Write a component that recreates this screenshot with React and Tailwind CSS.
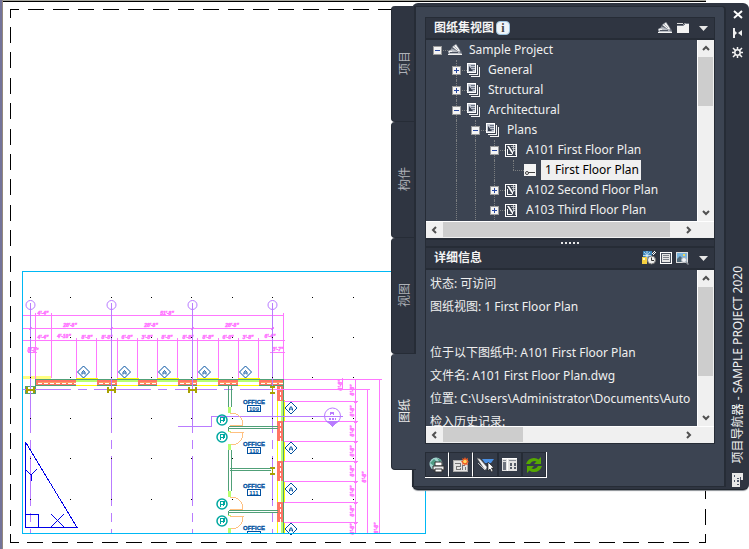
import React, { useState } from "react";

const tabs = [
  { id: "project", label: "项目" },
  { id: "constructs", label: "构件" },
  { id: "views", label: "视图" },
  { id: "sheets", label: "图纸" },
];

const treeRows = [
  { label: "Sample Project", level: 0, icon: "project", open: true },
  { label: "General", level: 1, icon: "subset", open: false },
  { label: "Structural", level: 1, icon: "subset", open: false },
  { label: "Architectural", level: 1, icon: "subset", open: true },
  { label: "Plans", level: 2, icon: "subset", open: true },
  { label: "A101 First Floor Plan", level: 3, icon: "sheet", open: true },
  { label: "1 First Floor Plan", level: 4, icon: "view", leaf: true },
  { label: "A102 Second Floor Plan", level: 3, icon: "sheet", open: false },
  { label: "A103 Third Floor Plan", level: 3, icon: "sheet", open: false },
];

const details = [
  "状态: 可访问",
  "图纸视图: 1 First Floor Plan",
  "",
  "位于以下图纸中: A101 First Floor Plan",
  "文件名: A101 First Floor Plan.dwg",
  "位置: C:\\Users\\Administrator\\Documents\\Auto",
  "检入历史记录:",
];

/* ---------- drawing ---------- */

const PINK = "#ff78ff";
const PURPLE = "#b97cff";
const NAVY = "#0050a0";
const GREEN = "#50a078";
const LIME = "#b8ff70";
const RED = "#ff7464";

const gridX = [30, 111, 192, 272];
const windowX = [76, 117, 157, 197, 238];
const wallX = [
  [36, 76],
  [97, 117],
  [138, 157],
  [178, 197],
  [218, 238],
  [259, 283],
];
const wallY = [
  [385, 401],
  [421, 441],
  [461, 481],
  [502, 522],
];
const windowY = [
  [400, 421],
  [441, 461],
  [481, 502],
  [522, 533],
];
const dimX = [51, 76, 96, 117, 137, 157, 177, 197, 218, 238, 258, 272, 283];
const dimY = [401, 421, 441, 461, 481, 502, 522];
const dimLabels = [
  [43, 315, "4'-4\""],
  [167, 315, "51'-8\""],
  [70, 327, "28'-8\""],
  [151, 327, "28'-8\""],
  [232, 327, "28'-8\""],
  [43, 339, "4'-4\""],
  [64, 338, "4'-10\""],
  [87, 339, "8'-8\""],
  [107, 339, "8'-8\""],
  [127, 339, "6'-0\""],
  [147, 339, "3'-8\""],
  [167, 339, "8'-8\""],
  [188, 339, "8'-8\""],
  [208, 339, "8'-8\""],
  [228, 339, "6'-0\""],
  [248, 339, "3'-8\""],
  [270, 338, "6'-4\""],
  [278, 351, "3'-7\""],
  [33, 352, "8'-8\""],
];
const sideLabels = [
  [342, 385],
  [354, 390],
  [354, 411],
  [354, 431],
  [354, 451],
  [354, 471],
  [354, 491],
  [354, 511],
  [354, 529],
  [366, 477],
  [378, 528],
];

const Diamond = ({ x, y }) => (
  <g stroke={NAVY} fill="none" shapeRendering="auto">
    <path d={`M${x - 6} ${y}L${x} ${y - 6}L${x + 6} ${y}L${x} ${y + 6}Z`} />
    <path d={`M${x - 1.5} ${y + 2.5}v-2l1.500 -2l1.500 2v2M${x - 1} ${y + 1}h2`} />
  </g>
);

const Drawing = () => (
  <svg
    className="absolute inset-0 h-full w-full"
    viewBox="0 0 749 549"
    preserveAspectRatio="xMinYMin meet"
    shapeRendering="crispEdges"
    fill="none"
    role="img"
    aria-label="First Floor Plan"
  >
    {/* sheet edges */}
    <path d="M0 .5H706" stroke="#a8a8a0" />
    <path d="M2 1.5H706" stroke="#000" />
    <rect x="0" y="0" width="2" height="549" fill="#73739a" />
    <rect x="2" y="0" width="1" height="549" fill="#93887e" />
    <path d="M10 9.5h9M28 9.5H420" stroke="#000" strokeDasharray="16 9" />
    <path d="M10.5 9v9" stroke="#000" />
    <path d="M10.5 27V530" stroke="#000" strokeDasharray="16 9.4" />
    <path d="M10.5 534v8.500h8" stroke="#000" />
    <path d="M27 542.5H692" stroke="#000" strokeDasharray="16 8.85" />
    <path d="M705.5 490v9M705.5 509v16M705.5 534v8.500h-7" stroke="#000" />

    {/* right wall */}
    {windowY.map(([a, b]) => (
      <g key={a}>
        <rect x="281" y={a} width="3" height={b - a} fill={LIME} />
        <path d={`M277.500 ${a}V${b}M284.500 ${a}V${b}`} stroke="#ff0" />
        <path d={`M283.500 ${a}V${b}`} stroke={GREEN} />
      </g>
    ))}
    {wallY.map(([a, b]) => (
      <g key={a}>
        <rect x="277" y={a} width="6" height={b - a} fill={RED} />
        <path d={`M280.500 ${a + 2}V${b}`} stroke="#fff" strokeDasharray="3 2" />
        <path d={`M283.500 ${a}V${b}`} stroke={GREEN} />
      </g>
    ))}

    {/* top wall */}
    <rect x="23" y="376" width="28" height="3" fill="#ffff80" />
    {windowX.map((x) => (
      <g key={x}>
        <rect x={x} y="380" width="21" height="2" fill={LIME} />
        <path d={`M${x} 379.500h21`} stroke={GREEN} />
        <path d={`M${x} 378.500h22M${x} 385.500h21`} stroke="#ff0" />
      </g>
    ))}
    {wallX.map(([a, b]) => (
      <g key={a}>
        <rect x={a} y="380" width={b - a} height="5" fill={RED} />
        <path d={`M${a} 379.500H${b}M${a} 385.500H${b}`} stroke={GREEN} />
        <path d={`M${a + 2} 382.500H${b}`} stroke="#ffa060" />
        <path d={`M${a + 2} 383.500H${b}`} stroke="#fff" strokeDasharray="4 2" />
      </g>
    ))}
    <path d="M25.500 386.500h10v7h-10zM35.500 379v7M283.500 379v22" stroke={GREEN} />

    {/* dimensions */}
    <g stroke={PINK}>
      <path d="M23 315.500H284M23 328.500H273M23 340.500H284M28 347.500h9M28 352.500h9M270 352.500h15" />
      <path d="M30.500 326V390M35.500 313V379M272.500 340V378M283.500 313V379" />
      <path d="M51.500 313V340" />
      {dimX.map((x) => (
        <path key={x} d={`M${x}.500 338V378M${x - 1} 340.500h3M${x} 341.500h1`} />
      ))}
      {gridX.map((x) => (
        <path key={x} d={`M${x - 1} 328.500h3M${x} 327.500h2M${x - 1} 329.500h2`} />
      ))}
      <path d="M355.500 379V533M367.500 389V533M379.500 379V533M342.500 378V390" />
      <path d="M284 379.500H382M273 389.500H370" />
      {dimY.map((y) => (
        <path key={y} d={`M284 ${y}.500h74M354 ${y + 1}.500h3`} />
      ))}
    </g>
    <g
      fill={PINK}
      stroke={PINK}
      strokeWidth=".5"
      className="font-['Liberation_Sans',sans-serif] text-[5px] font-bold italic"
      textAnchor="middle"
    >
      {dimLabels.map(([x, y, t]) => (
        <text key={`${x}-${y}`} x={x} y={y}>
          {t}
        </text>
      ))}
      {sideLabels.map(([x, y]) => (
        <text key={`${x}-${y}`} transform={`translate(${x} ${y}) rotate(-90)`}>
          8'-8"
        </text>
      ))}
    </g>

    {/* column grid */}
    <g stroke={PURPLE}>
      {gridX.map((x) => (
        <g key={x}>
          <circle cx={x + 0.5} cy="305" r="4.500" shapeRendering="auto" />
          <path
            d={`M${x}.500 303V433M${x}.500 440v9M${x}.500 456v50M${x}.500 513v9M${x}.500 529v4`}
          />
        </g>
      ))}
      <path d="M23 389.500h48M78 389.500h9M94 389.500h57M158 389.500h9M175 389.500h42M224 389.500h9M240 389.500h33" />
      <path d="M178 426.500h33.500v-10H343" />
      <circle cx="332.500" cy="416" r="8" shapeRendering="auto" />
      <path d="M330.500 415v-3h3v3M331 413.500h3" />
      <path d="M329 418.500h7M329 419.500h7" strokeDasharray="2 1" />
      <path d="M326 421.500h13M328 422.500h9" />
    </g>
    <path d="M328 423h9l-4.500 4z" fill={PURPLE} />
    <g fill="#a8a000">
      {[30, 111, 192].map((x) => (
        <path key={x} d={`M${x - 4} 387h2v2h5v-2h2v6h-2v-2h-5v2h-2z`} />
      ))}
      <path d="M270 386h5v2h-2v4h2v2h-5v-2h2v-4h-2zM270 467h5v2h-2v4h2v2h-5v-2h2v-4h-2z" />
    </g>
    {windowX.map((x) => (
      <Diamond key={x} x={x + 7.5} y={372} />
    ))}
    {[408, 448, 489, 529].map((y) => (
      <Diamond key={y} x={291} y={y} />
    ))}

    {/* offices */}
    <g stroke={GREEN}>
      <path d="M228.500 386v21M231.500 386v21M228.500 427v5M228.500 450v41M231.500 450v41M228.500 511v4" />
      <path d="M229 426.500h49M229 428.500h49M230 468.500h41M230 470.500h41M229 510.500h49M229 512.500h49" />
    </g>
    <path
      d="M228 407h3v6h-3zM228 431h3v1h-3zM228 444h3v6h-3zM228 491h3v6h-3zM228 515h3v1h-3zM228 528h3v5h-3z"
      fill={LIME}
    />
    <path
      d="M230 413.500h5q8 3 8 12h-13M230 432.500h13q0 9 -8 12h-4M230 497.500h5q8 3 8 12h-13M230 516.500h13q0 9 -8 12h-4"
      stroke="#ffc080"
    />
    {[420, 437, 504, 521].map((y) => (
      <g key={y} stroke="#00a8a0">
        <circle cx="222" cy={y} r="5" strokeWidth="1.500" shapeRendering="auto" />
        <path d={`M220.500 ${y - 3}v6M220 ${y - 2.5}h4v3h-3M223.500 ${y - 2}v4`} />
      </g>
    ))}
    <g
      fill={NAVY}
      className="font-['Liberation_Sans',sans-serif] text-[6px] font-bold"
      textAnchor="middle"
    >
      {[109, 110, 111].map((n, i) => (
        <g key={n}>
          <text x="254" y={404 + i * 42} stroke={NAVY} strokeWidth=".3">
            OFFICE
          </text>
          <text x="254" y={411 + i * 42}>
            {n}
          </text>
          <rect
            x="247.500"
            y={405.5 + i * 42}
            width="13"
            height="6"
            stroke={NAVY}
            fill="none"
          />
        </g>
      ))}
      <text x="254" y="530" stroke={NAVY} strokeWidth=".3">
        OFFICE
      </text>
    </g>
    <path d="M247 531.500h14M247.500 531v2M260.500 531v2" stroke={NAVY} />

    {/* grid snaps */}
    {[297, 337, 377, 418, 458, 499].map((y) => (
      <path
        key={y}
        d={`M30 ${y}.500H354`}
        stroke="#000"
        strokeDasharray="1 39.350"
      />
    ))}

    {/* ucs icon */}
    <g stroke="#0000e8">
      <path d="M25.500 442V527.500H77L25.500 442" />
      <path d="M25 514.500h13v13M51 514l13 13M64 514l-13 13M25 469l6 6l6 -6M31.500 475v6" />
    </g>
    <rect x="22.500" y="271.500" width="403" height="262" stroke="#00b8f4" />
  </svg>
);

/* ---------- icons ---------- */

const ProjectIcon = () => (
  <svg width="15" height="12" viewBox="0 0 15 12" aria-hidden="true">
    <path d="M0 7L4 5L14 8V11H1Z" fill="#b9bdc4" />
    <path d="M0 10.500h14M1 7.500h3" stroke="#f4f4f4" />
    <path d="M2 8.500h8" stroke="#4b5260" />
    <path d="M4 3L8 0L12 6L13 9L9 7Z" fill="#f4f4f4" stroke="#5c6370" strokeWidth=".6" />
    <path d="M3 4l5 3M6 2l4 4" stroke="#9aa0aa" strokeWidth=".8" />
    <path d="M11 7l3 1v2z" fill="#5c6370" />
  </svg>
);

const SubsetIcon = () => (
  <svg width="14" height="14" viewBox="0 0 14 14" aria-hidden="true" fill="none">
    <g shapeRendering="crispEdges">
      <rect x=".5" y=".5" width="8" height="9" fill="#c3c8d2" stroke="#fff" />
      <path d="M4 2.500h4M4 4.500h4M5 6.500h3" stroke="#6b7486" />
      <path d="M2 11.500H10.500V2M4 13.500H12.500V4" stroke="#f4f4f4" />
    </g>
    <path d="M2 3v5h4z" fill="#384050" />
  </svg>
);

const SheetIcon = () => (
  <svg width="12" height="13" viewBox="0 0 12 13" aria-hidden="true" fill="none">
    <rect x=".5" y=".5" width="11" height="12" fill="#39414f" stroke="#fff" />
    <path d="M2 2l6 9V8L4 2z" fill="#fff" />
    <path d="M2.500 5v6M2 10.500h5" stroke="#fff" />
    <path
      d="M6 2.500h5M7 4.500h4M8 6.500h3M8.500 1v7M10.500 1v10"
      stroke="#d8dade"
      strokeWidth=".8"
    />
  </svg>
);

const ViewIcon = () => (
  <svg width="12" height="12" viewBox="0 0 12 12" aria-hidden="true">
    <rect width="12" height="12" fill="#f4f4f4" />
    <path d="M4 8.500h7" stroke="#444" />
    <circle cx="3" cy="9" r="1.500" fill="none" stroke="#444" />
  </svg>
);

const icons = {
  project: ProjectIcon,
  subset: SubsetIcon,
  sheet: SheetIcon,
  view: ViewIcon,
};

const FolderIcon = () => (
  <svg width="12" height="12" viewBox="0 0 12 12" aria-hidden="true">
    <path d="M0 1h6v1H0z" fill="#d8d8d8" />
    <path d="M0 3h6l2 -2h4v10H0z" fill="#f2f2f2" />
    <path d="M0 3.500h6.500l2 -2H12" stroke="#6a707c" fill="none" />
  </svg>
);

const MenuArrow = () => (
  <svg width="9" height="5" viewBox="0 0 9 5" aria-hidden="true">
    <path d="M0 0h9L4.500 5z" fill="#e8e8e8" />
  </svg>
);

const HistoryIcon = () => (
  <svg width="14" height="14" viewBox="0 0 14 14" aria-hidden="true">
    <rect x="1" width="9" height="9" fill="#3a82b8" />
    <path d="M2 1l6 7M8 1L2 8M5 0v9M1 4.500h8" stroke="#d8ecf8" strokeWidth=".8" />
    <rect y="6" width="5" height="7" fill="#f6d040" />
    <rect x="1" y="7" width="2" height="2" fill="#fff8c0" />
    <path d="M10 3l3 -3M11 4l3 -3" stroke="#fff" />
    <circle cx="9.500" cy="9" r="4" fill="#eee" stroke="#777" />
    <path d="M9.500 6.500v3h2.500" stroke="#333" fill="none" />
  </svg>
);

const ListIcon = () => (
  <svg width="12" height="12" viewBox="0 0 12 12" shapeRendering="crispEdges" aria-hidden="true">
    <rect x=".5" y=".5" width="11" height="11" fill="#4a515d" stroke="#fff" />
    <rect x="2" y="2" width="8" height="8" fill="#e4e4e4" />
    <path d="M3 3.500h6M3 5.500h6M3 7.500h6" stroke="#7d828a" />
  </svg>
);

const PreviewIcon = () => (
  <svg width="13" height="13" viewBox="0 0 13 13" aria-hidden="true">
    <rect x=".5" y=".5" width="11" height="10" fill="#7ab4dc" stroke="#ddd" />
    <path d="M1 10V7l3 -3l3 3v3z" fill="#506878" />
    <rect x="7" y="2" width="2" height="2" fill="#f0d860" />
    <circle cx="8" cy="8" r="2.500" fill="#f0f4f8" stroke="#a8adb4" />
    <path d="M10 10l2.500 2.500" stroke="#8d929a" strokeWidth="1.500" />
  </svg>
);

const PublishIcon = () => (
  <svg width="16" height="16" viewBox="0 0 16 16" aria-hidden="true">
    <circle cx="7" cy="7" r="6.500" fill="#a4d4d0" />
    <path d="M1 6l4 -4l3 3l-3 4zM8 1l4 2l-1 3z" fill="#4f9c84" />
    <path d="M6 5h7v4H6z" fill="#fff" stroke="#333" />
    <path d="M4 9h11v4H4z" fill="#e8e8e8" stroke="#333" />
    <path d="M6 12h7v3H6z" fill="#fff" stroke="#333" />
  </svg>
);

const NewSheetIcon = () => (
  <svg width="16" height="16" viewBox="0 0 16 16" aria-hidden="true">
    <rect x=".5" y="3.500" width="14" height="11" fill="#e4e4e4" stroke="#aaa" />
    <path
      d="M2 6.500h5v3H3v3h4v-2M9.500 13V8h2M12.500 10v3"
      stroke="#777"
      fill="none"
      shapeRendering="crispEdges"
    />
    <path
      d="M12 0l1 2l2 -1l-.5 2.500L16 5l-2 1l1 2l-2.500 -.5L12 9l-1 -2L9 8l.5 -2L8 4.500l2 -1L9 1l2 1z"
      fill="#f05a20"
    />
    <circle cx="12" cy="4.500" r="1.800" fill="#ffd860" />
  </svg>
);

const PlaceIcon = () => (
  <svg width="17" height="16" viewBox="0 0 17 16" aria-hidden="true">
    <path d="M5 2h12l-3 4H8z" fill="#4a90e4" />
    <path d="M0 1l3 1l7 8l-1 3l-2 -1z" fill="#f4f4f4" stroke="#666" strokeWidth=".6" />
    <path d="M1 6l7 7" stroke="#ddd" strokeWidth=".8" />
    <path
      d="M11 5v9l2 -2l1.500 3l1.500 -1l-1.500 -3h2.500z"
      fill="#fff"
      stroke="#222"
      strokeWidth=".7"
    />
  </svg>
);

const LayoutIcon = () => (
  <svg width="15" height="13" viewBox="0 0 15 13" shapeRendering="crispEdges" aria-hidden="true">
    <rect width="15" height="13" fill="#e2e2e2" />
    <path d="M0 .5h15M5.500 0v13" stroke="#fff" />
    <path d="M1 2.500h3M7 2.500h7" stroke="#8a8f98" />
    <rect x="1" y="4" width="3" height="8" fill="#6e747f" />
    <path d="M8 5h2v3H8zM12 5h2v3h-2zM8 9h2v2H8zM12 9h2v2h-2z" fill="#555c68" />
  </svg>
);

const RefreshIcon = () => (
  <svg width="18" height="16" viewBox="0 0 18 16" aria-hidden="true">
    <path d="M1 7Q3 1 9 1q3 0 4.500 1.500L16 0v7H9l2.500 -2.500Q7 3 5 7z" fill="#55a800" />
    <path
      d="M17 9q-2 6 -8 6q-3 0 -4.500 -1.500L2 16V9h7l-2.500 2.500Q11 13 13 9z"
      fill="#55a800"
    />
  </svg>
);

/* ---------- palette ---------- */

const ScrollButton = ({ label, rotate }) => (
  <button aria-label={label} className="flex size-4 flex-none items-center justify-center">
    <svg width="8" height="8" viewBox="0 0 8 8" className={rotate} aria-hidden="true">
      <path d="M1 6l3 -3l3 3" fill="none" stroke="#505050" strokeWidth="2" />
    </svg>
  </button>
);

const ScrollPane = ({ children, height, thumbY, thumbX }) => (
  <div className="bg-[#f0f0f0]">
    <div className={`flex ${height}`}>
      <div className="min-w-0 flex-1 overflow-hidden bg-[#3c4452]">{children}</div>
      <div className="flex w-[17px] flex-none flex-col border-l border-white">
        <ScrollButton label="向上滚动" rotate="rotate-0" />
        <div className={`mr-px mt-px bg-[#cdcdcd] ${thumbY}`} />
        <div className="flex-1" />
        <ScrollButton label="向下滚动" rotate="rotate-180" />
      </div>
    </div>
    <div className="flex h-[17px] border-t border-white pr-[17px]">
      <ScrollButton label="向左滚动" rotate="-rotate-90" />
      <div className={`mb-px ml-px bg-[#cdcdcd] ${thumbX}`} />
      <div className="flex-1" />
      <ScrollButton label="向右滚动" rotate="rotate-90" />
    </div>
  </div>
);

const TreeRow = ({ row, selected, onSelect }) => {
  const Icon = icons[row.icon];
  return (
    <li
      role="treeitem"
      aria-level={row.level + 1}
      aria-expanded={row.leaf ? undefined : row.open}
      aria-selected={selected}
      className="flex h-5 items-center pl-[7px]"
    >
      {Array.from({ length: row.level }, (_, i) => (
        <span key={i} className="h-5 w-[19px] flex-none pl-1">
          {i > 0 && (
            <span className="block h-full border-l border-dotted border-[#7b7e80]" />
          )}
        </span>
      ))}
      <span className="relative flex h-5 w-[15px] flex-none items-center">
        {row.level > 0 && (
          <span
            className={`absolute left-1 top-0 border-l border-dotted border-[#7b7e80] ${
              row.leaf ? "h-[10px]" : "h-5"
            }`}
          />
        )}
        <span className="absolute left-1 right-0 top-[10px] border-t border-dotted border-[#7b7e80]" />
        {!row.leaf && (
          <button
            aria-label={`${row.open ? "折叠" : "展开"} ${row.label}`}
            className="relative flex size-[9px] items-center justify-center border border-[#9a9a9a] bg-[#f4f4f4]"
          >
            <svg width="5" height="5" viewBox="0 0 5 5" aria-hidden="true">
              <path
                d={row.open ? "M0 2.500h5" : "M0 2.500h5M2.500 0v5"}
                stroke="#2848a0"
              />
            </svg>
          </button>
        )}
      </span>
      <span className="flex w-[17px] flex-none items-center">
        <Icon />
      </span>
      <button
        onClick={onSelect}
        className={`h-5 whitespace-nowrap pl-1 pr-0.5 ${
          selected ? "bg-[#f0f0f0] text-black" : "text-[#f0f0f0]"
        }`}
      >
        {row.label}
      </button>
    </li>
  );
};

const PaneHeader = ({ title, badge, children }) => (
  <div className="flex h-[22px] items-center border-b-2 border-[#262c36] bg-[#2f3541] pl-2 pr-1.5">
    <h2 className="text-[12px] font-bold text-[#f4f4f4]">{title}</h2>
    {badge}
    <div className="ml-auto flex items-center gap-1">
      {children}
      <button aria-label="菜单" className="ml-1.5">
        <MenuArrow />
      </button>
    </div>
  </div>
);

const App = () => {
  const [tab, setTab] = useState("sheets");
  const [selected, setSelected] = useState(6);

  return (
    <main className="relative min-h-screen overflow-hidden bg-white font-['Noto_Sans','Noto_Sans_CJK_SC',sans-serif] text-[12px]">
      <Drawing />

      <section
        aria-label="项目导航器"
        className="relative ml-auto mt-[3px] flex w-[358px]"
      >
        {/* tabs */}
        <div
          role="tablist"
          aria-orientation="vertical"
          className="relative z-10 mt-[3px] flex w-[25px] flex-none flex-col self-start"
        >
          {tabs.map((t) => (
            <button
              key={t.id}
              role="tab"
              aria-selected={tab === t.id}
              onClick={() => setTab(t.id)}
              className={`flex h-[116px] items-center justify-center rounded-l-sm border-b border-l border-[#262c36] ${
                tab === t.id
                  ? "bg-[#3c4452] pl-0.5 text-[#e8e8e8]"
                  : "border-r-2 bg-[#2f3541] pl-1 text-[#aeb2b8]"
              }`}
            >
              <span className="rotate-180 [text-orientation:sideways] [writing-mode:vertical-rl]">
                {t.label}
              </span>
            </button>
          ))}
        </div>

        <div className="-ml-1 flex min-w-0 flex-1 rounded-md border-b border-[#20262e] bg-[#2f3541] pb-[2px] pt-[3px] shadow-[0_1px_1px_#8a8e94]">
          <div className="min-w-0 flex-1 rounded-t border-x-2 border-y border-[#262c36] bg-[#3c4452] pb-2 pl-[11px] pr-[9px] pt-[10px]">
            <div className="border border-[#262c36]">
              <PaneHeader
                title="图纸集视图"
                badge={
                  <button
                    aria-label="信息"
                    className="ml-0.5 flex size-[14px] items-center justify-center rounded-sm border border-[#9cc4e0] bg-[#eef4f8] font-['Liberation_Serif',serif] text-[12px] font-bold text-[#444]"
                  >
                    i
                  </button>
                }
              >
                <button aria-label="图纸集">
                  <ProjectIcon />
                </button>
                <button aria-label="打开">
                  <FolderIcon />
                </button>
              </PaneHeader>
              <ScrollPane height="h-[181px]" thumbY="h-[49px]" thumbX="w-[227px]">
                <ul role="tree" aria-label="图纸集视图">
                  {treeRows.map((row, i) => (
                    <TreeRow
                      key={row.label}
                      row={row}
                      selected={selected === i}
                      onSelect={() => setSelected(i)}
                    />
                  ))}
                </ul>
              </ScrollPane>
              <div className="flex h-[10px] items-center justify-center gap-0.5 border-y-2 border-[#262c36] bg-[#2f3541]">
                {[0, 1, 2, 3, 4].map((n) => (
                  <span key={n} className="size-[2px] bg-[#e8e8e8]" />
                ))}
              </div>
              <PaneHeader title="详细信息">
                <button aria-label="历史记录">
                  <HistoryIcon />
                </button>
                <button aria-label="详细信息">
                  <ListIcon />
                </button>
                <button aria-label="预览">
                  <PreviewIcon />
                </button>
              </PaneHeader>
              <ScrollPane height="h-[156px]" thumbY="h-[89px]" thumbX="w-[80px]">
                <div className="pl-1 pt-[2px] text-[#f0f0f0]">
                  {details.map((line, i) => (
                    <p key={i} className="h-[23px] whitespace-nowrap leading-[23px]">
                      {line}
                    </p>
                  ))}
                </div>
              </ScrollPane>
            </div>

            <div
              role="toolbar"
              aria-label="图纸工具"
              className="mt-2 flex h-[26px] w-[122px] border-b border-r border-white"
            >
              {[
                ["发布", PublishIcon, "border-r-white"],
                ["添加图纸", NewSheetIcon, "border-r-white"],
                ["放置视图", PlaceIcon, "border-r-[#262c36]"],
                ["布局", LayoutIcon, "border-r-[#262c36]"],
                ["刷新", RefreshIcon, "border-r-[#262c36]"],
              ].map(([label, Icon, edge]) => (
                <button
                  key={label}
                  aria-label={label}
                  className={`flex flex-1 items-center justify-center border border-[#262c36] bg-[#343b48] ${edge}`}
                >
                  <Icon />
                </button>
              ))}
            </div>
          </div>

          {/* title strip */}
          <div className="flex w-[23px] flex-none flex-col items-center text-[#f0f0f0]">
            <button aria-label="关闭" className="flex h-[17px] items-center">
              <svg width="10" height="9" viewBox="0 0 10 9" aria-hidden="true">
                <path d="M1 1l8 7M9 1L1 8" stroke="#fff" strokeWidth="2" />
              </svg>
            </button>
            <button aria-label="自动隐藏" className="flex h-5 items-center">
              <svg width="10" height="10" viewBox="0 0 10 10" aria-hidden="true">
                <path d="M0 0h2v10H0zM2 3v4l2 -2zM9 2v6L5 5z" fill="#f0f0f0" />
              </svg>
            </button>
            <button aria-label="特性" className="flex h-[18px] items-center">
              <svg
                width="11"
                height="11"
                viewBox="0 0 11 11"
                fill="none"
                stroke="#f4f4f4"
                aria-hidden="true"
              >
                <circle cx="5.500" cy="5.500" r="2.700" strokeWidth="1.500" />
                <path
                  d="M5.500 0v2.500M5.500 8.500V11M0 5.500h2.500M8.500 5.500H11M1 1l2.500 2.500M7.500 7.500l2.500 2.500M10 1l-2.500 2.500M3.500 7.500l-2.500 2.500"
                  strokeWidth="1.500"
                />
              </svg>
            </button>
            <h1 className="mb-2.5 mt-auto rotate-180 whitespace-nowrap [text-orientation:sideways] [writing-mode:vertical-rl]">
              项目导航器 - SAMPLE PROJECT 2020
            </h1>
            <svg
              className="flex-none"
              width="11"
              height="14"
              viewBox="0 0 11 14"
              shapeRendering="crispEdges"
              aria-hidden="true"
            >
              <path d="M0 0h11v7H8v7H0z" fill="#e8e8e8" />
              <path d="M2 2h1v2H2zM5 5h2v1H5zM2 7h1v2H2zM5 7h2v2H5zM5 11h2v1H5zM8 4h1v3H8z" fill="#50586a" />
            </svg>
          </div>
        </div>
      </section>
    </main>
  );
};

export default App;
